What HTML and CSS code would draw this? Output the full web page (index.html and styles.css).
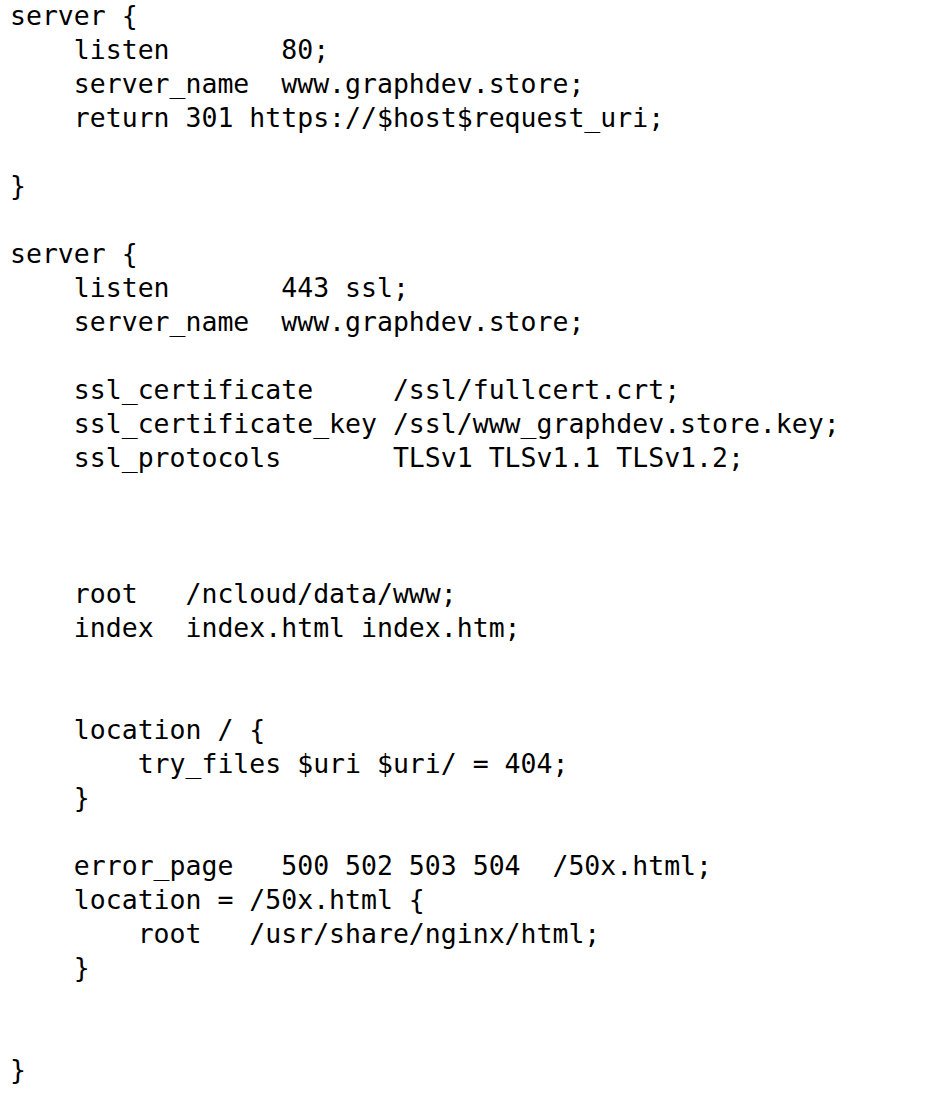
FILE: index.html
```html
<!DOCTYPE html>
<html>
<head>
<meta charset="utf-8">
<link rel="stylesheet" href="styles.css">
</head>
<body>
<pre class="code">server {
    listen       80;
    server_name  www.graphdev.store;
    return 301 https://$host$request_uri;

}

server {
    listen       443 ssl;
    server_name  www.graphdev.store;

    ssl_certificate     /ssl/fullcert.crt;
    ssl_certificate_key /ssl/www_graphdev.store.key;
    ssl_protocols       TLSv1 TLSv1.1 TLSv1.2;



    root   /ncloud/data/www;
    index  index.html index.htm;


    location / {
        try_files $uri $uri/ = 404;
    }

    error_page   500 502 503 504  /50x.html;
    location = /50x.html {
        root   /usr/share/nginx/html;
    }


}</pre>
</body>
</html>
```
FILE: styles.css
```css
html, body {
  margin: 0;
  padding: 0;
  background: #ffffff;
}
.code {
  margin: 0;
  padding: 0 0 0 10px;
  font-family: "DejaVu Sans Mono", "Liberation Mono", monospace;
  font-size: 26.5px;
  line-height: 34px;
  color: #000000;
  white-space: pre;
  position: relative;
  top: -1px;
}
```
